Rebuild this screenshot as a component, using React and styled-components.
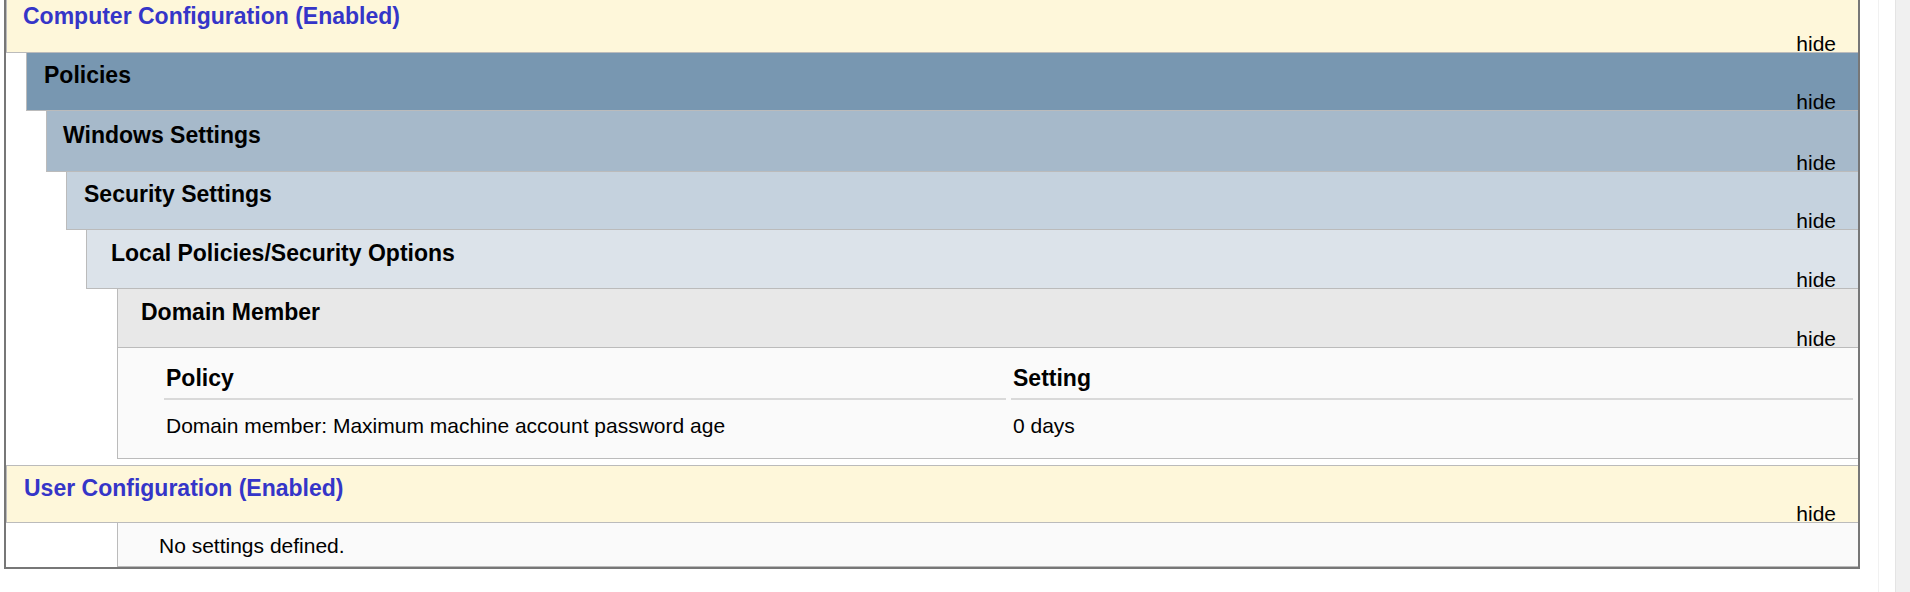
import React from 'react';
import styled, { createGlobalStyle } from 'styled-components';

const GlobalStyle = createGlobalStyle`
  html, body {
    margin: 0;
    padding: 0;
    background: #ffffff;
  }
  body {
    font-family: "Liberation Sans", Arial, sans-serif;
    color: #000000;
  }
`;

const StyledPage = styled.div`
  display: flex;
  width: 1910px;
  height: 592px;
  overflow: hidden;
`;

const StyledPanel = styled.div`
  align-self: flex-start;
  width: 1856px;
  margin-left: 4px;
  box-sizing: border-box;
  border-left: 2px solid #777777;
  border-right: 2px solid #777777;
  border-bottom: 2px solid #777777;
`;

const StyledGutter = styled.div`
  width: 18px;
  border-right: 1px solid #f1f1f1;
`;

const StyledTrack = styled.div`
  flex: 1;
  margin-left: 16px;
  background: #f0f0f0;
  border-left: 1px solid #e4e4e4;
`;

const StyledSection = styled.div`
  margin-left: ${({ $indent }) => $indent || 0}px;
  margin-top: ${({ $gap }) => $gap || 0}px;
`;

const StyledBand = styled.div`
  display: flex;
  flex-direction: column;
  justify-content: space-between;
  height: ${({ $h }) => $h}px;
  padding: ${({ $pt }) => $pt}px 22px 0 ${({ $pl }) => $pl}px;
  box-sizing: border-box;
  background: ${({ $bg }) => $bg};
  border-left: 1px solid #bbbbbb;
  border-bottom: 1px solid #bbbbbb;
  border-top: ${({ $top }) => ($top ? '1px solid #bbbbbb' : 'none')};
`;

const StyledTitle = styled.div`
  font-size: 23px;
  line-height: 23px;
  font-weight: 700;
  color: ${({ $blue }) => ($blue ? '#3535c8' : '#000000')};
  white-space: nowrap;
`;

const StyledHide = styled.span`
  align-self: flex-end;
  font-size: 21px;
  line-height: 17px;
  color: #000000;
`;

const StyledBody = styled.div`
  padding: 19px 0 22px 41px;
  background: #fafafa;
  border-left: 1px solid #bbbbbb;
  border-bottom: 1px solid #bbbbbb;
`;

const StyledTable = styled.table`
  width: 100%;
  border-collapse: separate;
  border-spacing: 5px 0;
  table-layout: fixed;
`;

const StyledTh = styled.th`
  text-align: left;
  font-size: 23px;
  line-height: 23px;
  font-weight: 700;
  padding: 0 0 8px 2px;
  border-bottom: 2px solid #d9d9d9;
`;

const StyledTd = styled.td`
  font-size: 21px;
  line-height: 21px;
  padding: 15px 0 0 2px;
`;

const StyledEmpty = styled.div`
  height: 44px;
  margin-left: 111px;
  padding: 12px 0 0 41px;
  box-sizing: border-box;
  background: #fafafa;
  border-left: 1px solid #bbbbbb;
  border-bottom: 1px solid #bbbbbb;
  font-size: 21px;
  line-height: 21px;
`;

function Band({ title, bg, h, pt = 10, pl, blue, top }) {
  return (
    <StyledBand $bg={bg} $h={h} $pt={pt} $pl={pl} $top={top}>
      <StyledTitle $blue={blue}>{title}</StyledTitle>
      <StyledHide>hide</StyledHide>
    </StyledBand>
  );
}

export default function App() {
  return (
    <StyledPage>
      <GlobalStyle />
      <StyledPanel>
        <StyledSection>
          <Band
            title="Computer Configuration (Enabled)"
            bg="#fef7da"
            h={53}
            pt={5}
            pl={16}
            blue
          />
          <StyledSection $indent={20}>
            <Band title="Policies" bg="#7897b1" h={58} pt={11} pl={17} />
            <StyledSection $indent={20}>
              <Band title="Windows Settings" bg="#a6b9ca" h={61} pt={13} pl={16} />
              <StyledSection $indent={20}>
                <Band title="Security Settings" bg="#c5d2de" h={58} pt={11} pl={17} />
                <StyledSection $indent={20}>
                  <Band
                    title="Local Policies/Security Options"
                    bg="#dce3ea"
                    h={59}
                    pt={12}
                    pl={24}
                  />
                  <StyledSection $indent={31}>
                    <Band title="Domain Member" bg="#e8e8e8" h={59} pt={12} pl={23} />
                    <StyledBody>
                      <StyledTable>
                        <thead>
                          <tr>
                            <StyledTh>Policy</StyledTh>
                            <StyledTh>Setting</StyledTh>
                          </tr>
                        </thead>
                        <tbody>
                          <tr>
                            <StyledTd>Domain member: Maximum machine account password age</StyledTd>
                            <StyledTd>0 days</StyledTd>
                          </tr>
                        </tbody>
                      </StyledTable>
                    </StyledBody>
                  </StyledSection>
                </StyledSection>
              </StyledSection>
            </StyledSection>
          </StyledSection>
        </StyledSection>
        <StyledSection $gap={6}>
          <Band
            title="User Configuration (Enabled)"
            bg="#fef7da"
            h={58}
            pt={11}
            pl={17}
            blue
            top
          />
          <StyledEmpty>No settings defined.</StyledEmpty>
        </StyledSection>
      </StyledPanel>
      <StyledGutter />
      <StyledTrack />
    </StyledPage>
  );
}
